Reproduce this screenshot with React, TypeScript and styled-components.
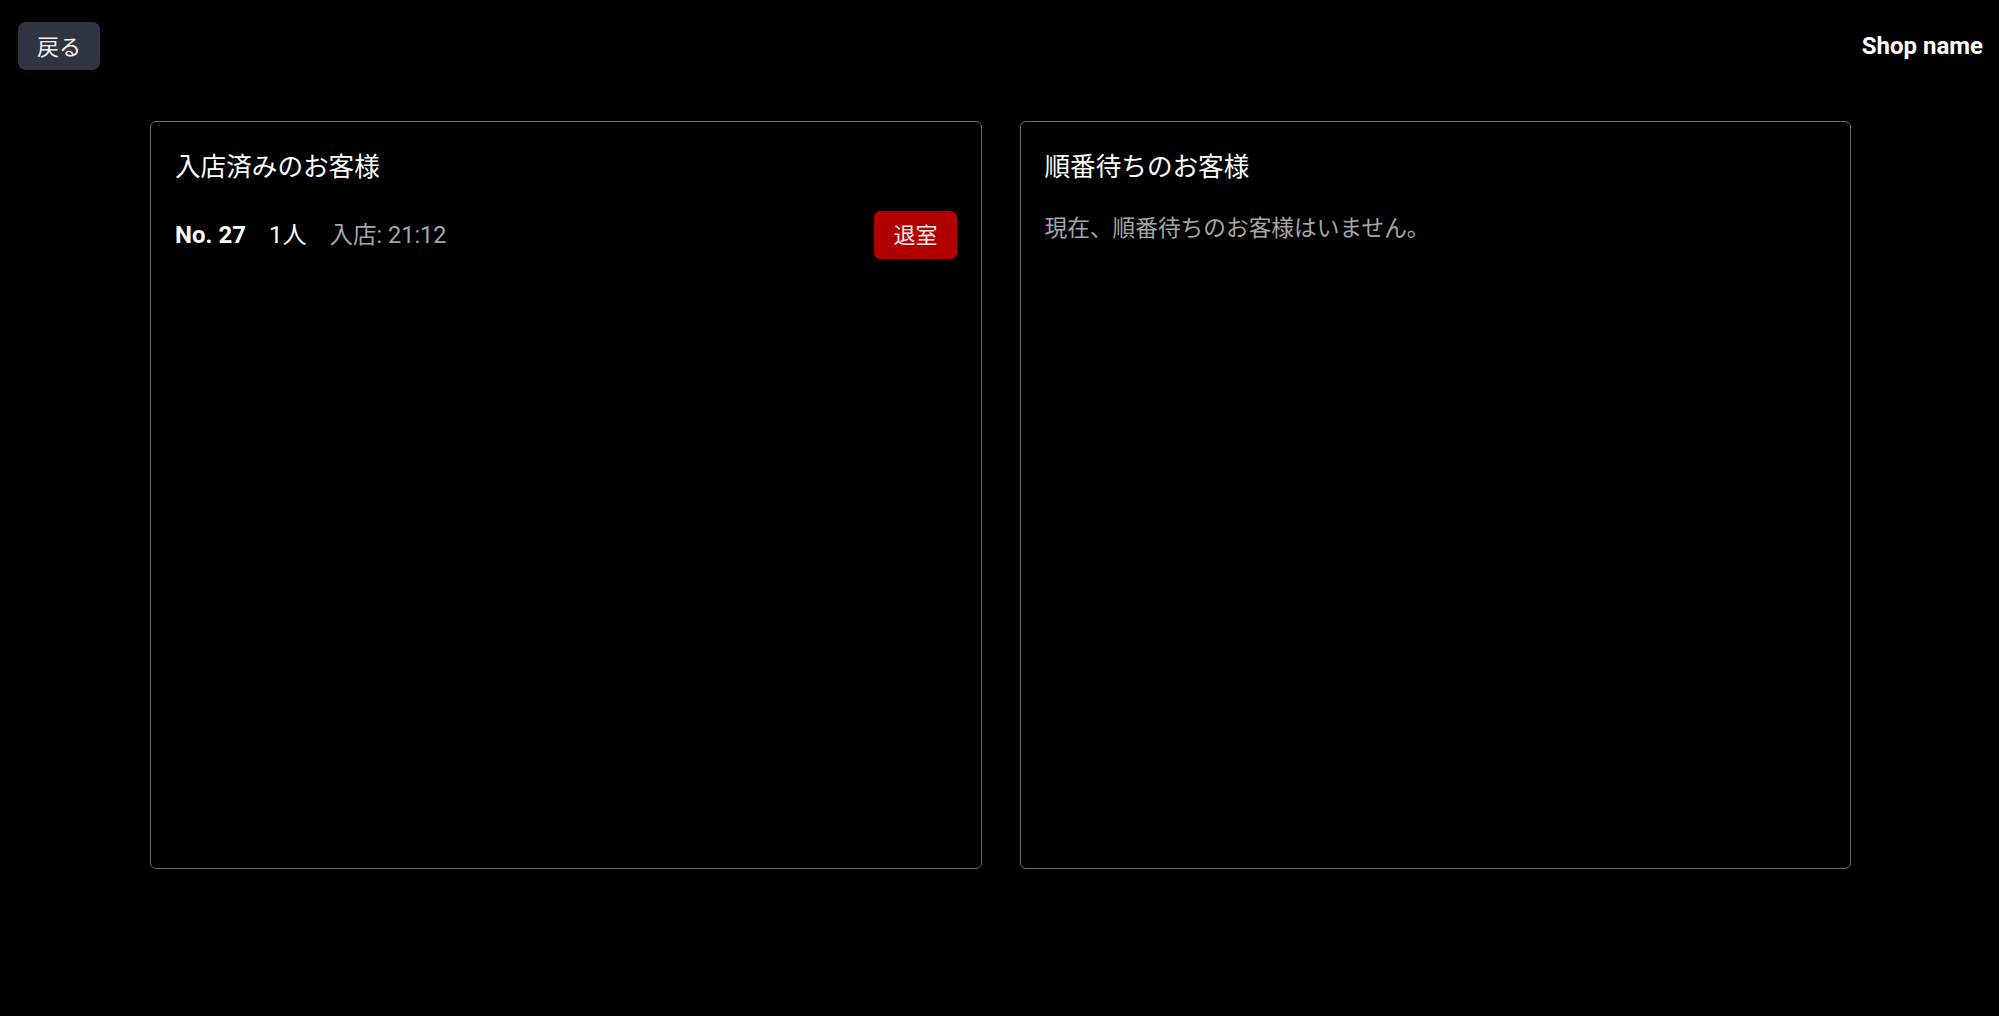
import React from 'react';
import styled, { createGlobalStyle } from 'styled-components';

interface Guest {
  no: number;
  people: number;
  enteredAt: string;
}

const GlobalStyle = createGlobalStyle`
  html, body {
    margin: 0;
    padding: 0;
    background: #000;
    color: #fff;
    font-family: Roboto, "Noto Sans CJK JP", sans-serif;
  }
`;

const Page = styled.div`
  min-height: 1016px;
  background: #000;
`;

const Header = styled.header`
  display: flex;
  align-items: center;
  justify-content: space-between;
  padding: 22px 16px 0 18px;
`;

const BackButton = styled.button`
  height: 48px;
  padding: 0 19px 3px;
  border: none;
  border-radius: 8px;
  background: #2f3542;
  color: #f2f2f2;
  font-family: inherit;
  font-size: 22px;
  box-shadow: 0 2px 6px rgba(255, 255, 255, 0.04), 0 4px 10px rgba(0, 0, 0, 0.6);
  cursor: pointer;
`;

const ShopName = styled.h1`
  margin: 0;
  font-size: 24px;
  font-weight: 700;
`;

const Board = styled.main`
  margin: 51px 148px 0 150px;
  display: grid;
  grid-template-columns: 1fr 1fr;
  gap: 38px;
`;

const Panel = styled.section`
  height: 748px;
  box-sizing: border-box;
  padding: 24px;
  border: 1px solid #6a6a6a;
  border-radius: 6px;
`;

const PanelTitle = styled.h2`
  margin: 3px 0 26px;
  font-size: 25.6px;
  font-weight: 400;
  line-height: 36px;
`;

const GuestRow = styled.div`
  display: flex;
  align-items: center;
  font-size: 24px;
`;

const GuestInfo = styled.div`
  display: flex;
  align-items: baseline;
  gap: 23px;
  line-height: 32px;
`;

const GuestNo = styled.span`
  font-weight: 700;
`;

const Meta = styled.span`
  color: #a3a6ad;
  font-size: 23.5px;
`;

const ExitButton = styled.button`
  margin-left: auto;
  height: 48px;
  padding: 0 19px 4px;
  border: none;
  border-radius: 6px;
  background: #b00000;
  color: #fbeaea;
  font-family: inherit;
  font-size: 22px;
  cursor: pointer;
`;

const Empty = styled.p`
  margin: 0;
  font-size: 22.7px;
  line-height: 36px;
  color: #a6a6a6;
`;

const seated: Guest[] = [{ no: 27, people: 1, enteredAt: '21:12' }];

export default function App() {
  return (
    <Page>
      <GlobalStyle />
      <Header>
        <BackButton>戻る</BackButton>
        <ShopName>Shop name</ShopName>
      </Header>
      <Board>
        <Panel>
          <PanelTitle>入店済みのお客様</PanelTitle>
          {seated.map((g) => (
            <GuestRow key={g.no}>
              <GuestInfo>
                <GuestNo>No. {g.no}</GuestNo>
                <span>{g.people}人</span>
                <Meta>入店: {g.enteredAt}</Meta>
              </GuestInfo>
              <ExitButton>退室</ExitButton>
            </GuestRow>
          ))}
        </Panel>
        <Panel>
          <PanelTitle>順番待ちのお客様</PanelTitle>
          <Empty>現在、順番待ちのお客様はいません。</Empty>
        </Panel>
      </Board>
    </Page>
  );
}
